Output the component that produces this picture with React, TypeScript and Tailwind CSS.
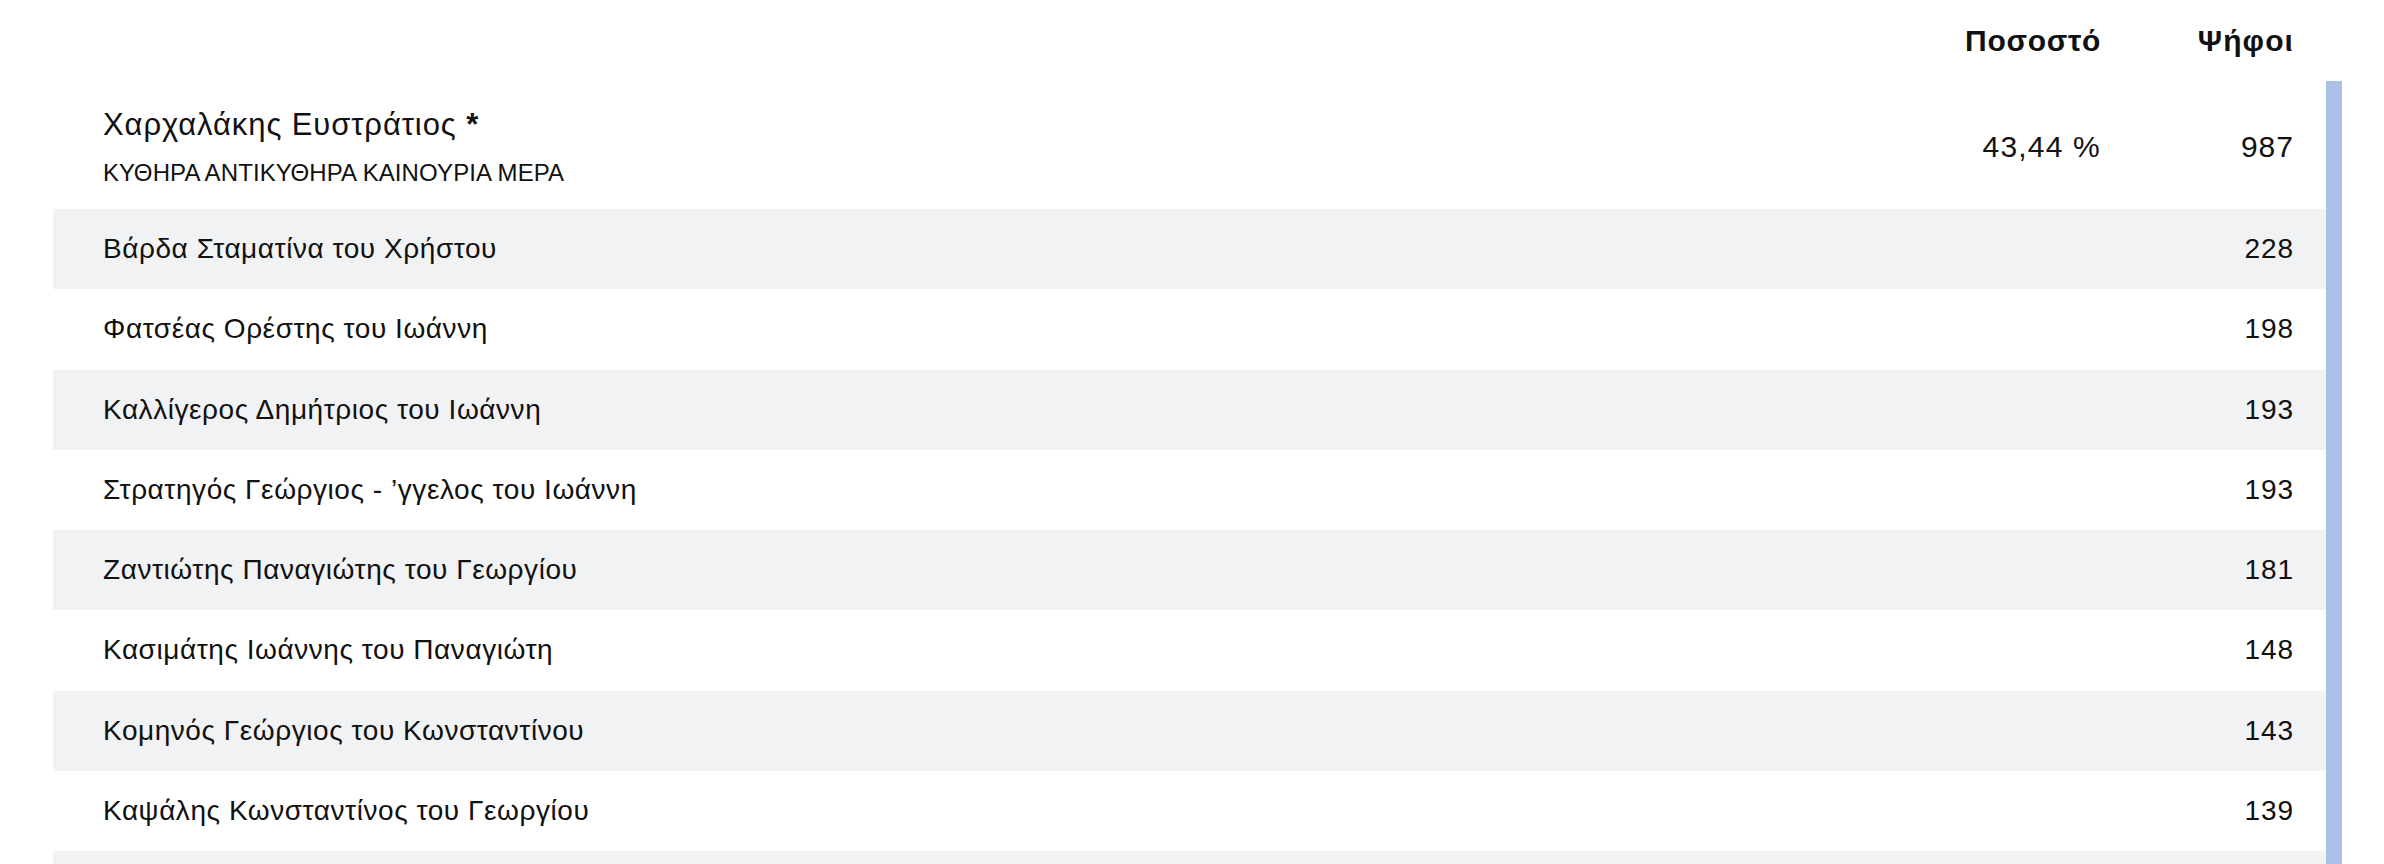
import React from "react";

const rows: { name: string; votes: string }[] = [
  { name: "Βάρδα Σταματίνα του Χρήστου", votes: "228" },
  { name: "Φατσέας Ορέστης του Ιωάννη", votes: "198" },
  { name: "Καλλίγερος Δημήτριος του Ιωάννη", votes: "193" },
  { name: "Στρατηγός Γεώργιος - ’γγελος του Ιωάννη", votes: "193" },
  { name: "Ζαντιώτης Παναγιώτης του Γεωργίου", votes: "181" },
  { name: "Κασιμάτης Ιωάννης του Παναγιώτη", votes: "148" },
  { name: "Κομηνός Γεώργιος του Κωνσταντίνου", votes: "143" },
  { name: "Καψάλης Κωνσταντίνος του Γεωργίου", votes: "139" },
  { name: "", votes: "" },
];

export default function App() {
  return (
    <div
      className="h-[864px] w-full overflow-hidden bg-white text-[#111]"
      style={{ fontFamily: '"Liberation Sans", Arial, sans-serif' }}
    >
      <div className="flex flex-col pl-[53px]">
        {/* Header */}
        <div className="flex h-[81px] pr-[58px]">
          <div className="flex-1" />
          <div className="w-[240px] pt-[23px] text-right text-[30px] font-bold leading-[36px] tracking-[0.7px]">
            Ποσοστό
          </div>
          <div className="w-[225px] pr-[32px] pt-[23px] text-right text-[30px] font-bold leading-[36px] tracking-[1.1px]">
            Ψήφοι
          </div>
        </div>
        {/* Body */}
        <div className="flex pr-[42px]">
          <div className="flex flex-1 flex-col">
            <div className="flex h-[128px] items-center">
              <div className="flex flex-1 flex-col pl-[50px] pt-[4px]">
                <div className="text-[31px] leading-[36px] tracking-[0.9px]">
                  Χαρχαλάκης Ευστράτιος <span className="font-bold">*</span>
                </div>
                <div className="mt-[15px] text-[24px] leading-[30px] tracking-[0.1px]">
                  ΚΥΘΗΡΑ ΑΝΤΙΚΥΘΗΡΑ ΚΑΙΝΟΥΡΙΑ ΜΕΡΑ
                </div>
              </div>
              <div className="w-[240px] pt-[3px] text-right text-[30px] leading-[36px] tracking-[1.2px]">43,44 %</div>
              <div className="w-[225px] pr-[32px] pt-[3px] text-right text-[30px] leading-[36px] tracking-[1px]">987</div>
            </div>
            {rows.map((r, i) => (
              <div
                key={i}
                className={
                  "flex h-[80.25px] shrink-0 items-center " +
                  (i % 2 === 0 ? "bg-[#f1f2f4]" : "bg-white")
                }
              >
                <div className="flex-1 pl-[50px] text-[28px] leading-[34px] tracking-[0.55px]">{r.name}</div>
                <div className="w-[225px] pr-[32px] text-right text-[28px] leading-[34px] tracking-[0.9px]">{r.votes}</div>
              </div>
            ))}
          </div>
          <div className="w-[16px] shrink-0 bg-[#abc0e6]" />
        </div>
      </div>
    </div>
  );
}
